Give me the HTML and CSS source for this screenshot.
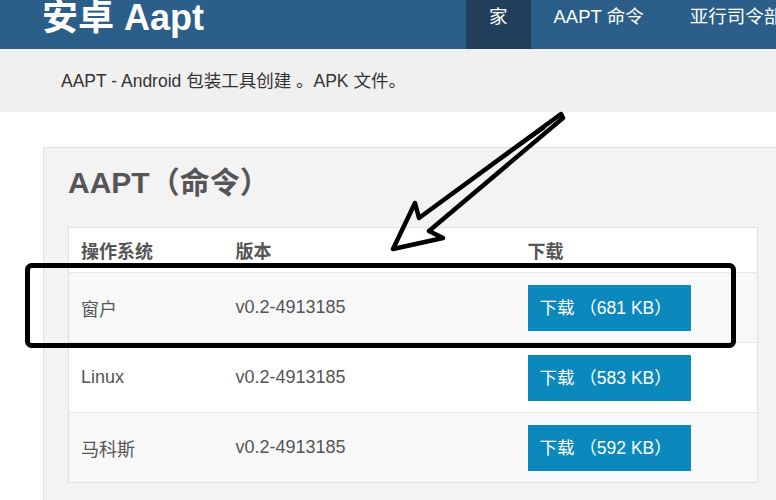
FILE: index.html
```html
<!DOCTYPE html>
<html lang="zh">
<head>
  <meta charset="UTF-8" />
  <title>安卓 Aapt</title>
  <meta name="viewport" content="width=device-width, initial-scale=1.0" />
  <link rel="stylesheet" href="styles.css">
</head>
<body>
  <header class="topbar">
    <div class="brand">安卓 Aapt</div>
    <nav class="nav">
      <a class="active" href="#">家</a>
      <a href="#">AAPT 命令</a>
      <a href="#">亚行司令部</a>
    </nav>
  </header>

  <div class="intro">
    <p>AAPT - Android 包装工具创建 。APK 文件。</p>
  </div>

  <section class="panel">
    <h2>AAPT（命令）</h2>
    <table class="downloads">
      <thead>
        <tr><th class="os">操作系统</th><th class="ver">版本</th><th>下载</th></tr>
      </thead>
      <tbody>
        <tr><td>窗户</td><td>v0.2-4913185</td><td><a class="btn" href="#">下载 （681 KB）</a></td></tr>
        <tr><td>Linux</td><td>v0.2-4913185</td><td><a class="btn" href="#">下载 （583 KB）</a></td></tr>
        <tr><td>马科斯</td><td>v0.2-4913185</td><td><a class="btn" href="#">下载 （592 KB）</a></td></tr>
      </tbody>
    </table>
  </section>

  <!-- hand-drawn annotation on top of the page -->
  <svg class="markup" width="776" height="500" viewBox="0 0 776 500">
    <rect x="27.5" y="265.5" width="706" height="80" rx="4" fill="none" stroke="#000" stroke-width="5"/>
    <polygon points="561,114 419,218 415,203 393,249 443,238 429,231 563,118"
             fill="none" stroke="#000" stroke-width="4.5" stroke-linejoin="round"/>
    <line x1="545" y1="128" x2="500" y2="160" stroke="#000" stroke-width="2"/>
  </svg>
</body>
</html>
```

FILE: styles.css
```css
body {
  margin: 0;
  width: 776px;
  height: 500px;
  overflow: hidden;
  position: relative;
  background: #fff;
  color: #555;
  font-family: "Liberation Sans", "Noto Sans CJK SC", sans-serif;
}
.topbar {
  display: flex;
  align-items: flex-start;
  height: 49px;
  background: #2b5e89;
  padding-left: 42px;
  white-space: nowrap;
  overflow: hidden;
}
.brand {
  flex-shrink: 0;
  color: #fff;
  font-size: 36px;
  font-weight: bold;
  line-height: 36px;
  width: 424px;
}
.nav {
  display: flex;
  flex-shrink: 0;
}
.nav a {
  display: block;
  height: 49px;
  padding: 6px 23px 0;
  box-sizing: border-box;
  color: #fff;
  font-size: 18.5px;
  line-height: 22px;
  text-decoration: none;
}
.nav a.active {
  background: #213f5b;
}
.intro {
  background: #f0f0f0;
  height: 63px;
  padding-left: 61px;
  overflow: hidden;
}
.intro p {
  margin: 0;
  padding-top: 20px;
  font-size: 17.5px;
  line-height: 24px;
  color: #333;
}
.panel {
  margin: 35px 0 0 43px;
  width: 740px;
  height: 353px;
  background: #f3f3f3;
  border: 1px solid #e0e0e0;
  border-bottom: none;
  padding: 17px 24px 0;
  box-sizing: border-box;
}
.panel h2 {
  margin: 0 0 26px;
  font-size: 30px;
  line-height: 36px;
  color: #555;
}
.downloads {
  width: 690px;
  border: 1px solid #e0e0e0;
  border-collapse: collapse;
  background: #fff;
  font-size: 18px;
}
.downloads th {
  text-align: left;
  font-weight: bold;
  color: #555;
  height: 45px;
  padding: 0 12px;
  box-sizing: border-box;
  vertical-align: middle;
}
.downloads th.os {
  width: 155px;
}
.downloads th.ver {
  width: 292px;
}
.downloads td {
  height: 69px;
  padding: 0 12px;
  border-top: 1px solid #e6e6e6;
  color: #555;
  vertical-align: middle;
}
.downloads tbody tr:nth-child(odd) {
  background: #f8f8f8;
}
.btn {
  display: inline-block;
  width: 163px;
  height: 46px;
  box-sizing: border-box;
  padding-left: 12px;
  background: #0b89bd;
  color: #fff;
  font-size: 17.5px;
  line-height: 46px;
  text-decoration: none;
  white-space: nowrap;
}
.markup {
  position: absolute;
  left: 0;
  top: 0;
  pointer-events: none;
}
```
